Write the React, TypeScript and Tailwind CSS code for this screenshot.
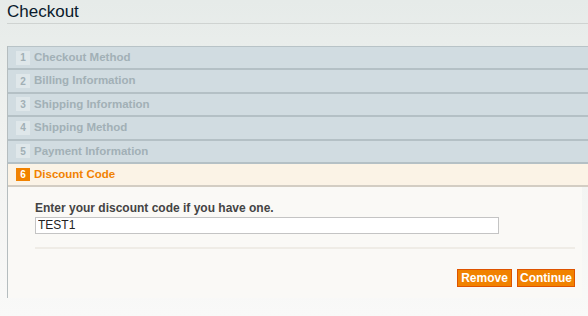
import React from "react";

const steps = [
  "Checkout Method",
  "Billing Information",
  "Shipping Information",
  "Shipping Method",
  "Payment Information",
];

export default function App() {
  return (
    <div
      className="w-[588px] h-[316px] overflow-hidden bg-gradient-to-b from-[#e6ebe9] via-[#f2f3f1] to-[#f9f9f8]"
      style={{ fontFamily: '"Liberation Sans", Arial, sans-serif' }}
    >
      <div className="pl-[7px] pt-[2px]">
        <h1 className="text-[17px] leading-[20px] text-[#0a1a2c] border-b border-[#cfd3d1] h-[22px]">
          Checkout
        </h1>
      </div>
      <div className="ml-[7px] mt-[22px] w-[600px] border-l border-[#b5bdbf]">
        <div className="border-t border-[#b8c3c7]">
          {steps.map((s, i) => (
            <div
              key={s}
              className="h-[23.4px] flex items-center bg-[#d1dce1] border-b-2 border-[#b4c0c5] pl-[8px]"
            >
              <span className="w-[14px] h-[14px] bg-[#dfe7ea] text-[#a1afb5] text-[10px] font-bold flex items-center justify-center">
                {i + 1}
              </span>
              <span className="ml-[4px] text-[11.5px] font-bold text-[#a2b0b6]">{s}</span>
            </div>
          ))}
          <div className="h-[23px] flex items-center bg-[#fbf3e6] border-b-2 border-[#d3cdc3] pl-[8px]">
            <span className="w-[14px] h-[13px] bg-[#f18200] text-white text-[10px] font-bold flex items-center justify-center">
              6
            </span>
            <span className="ml-[4px] text-[11.5px] font-bold text-[#f18200]">Discount Code</span>
          </div>
        </div>
        <div className="bg-[#faf9f6] h-[111px] pl-[27px] pt-[14px] w-[574px]">
          <div className="text-[12px] font-bold text-[#444] leading-[15px]">
            Enter your discount code if you have one.
          </div>
          <input
            readOnly
            value="TEST1"
            className="block w-[464px] h-[17px] border border-[#c4c4c4] bg-white text-[12px] text-[#222] px-[2px] mt-[1px] outline-none"
            style={{ fontFamily: '"Liberation Sans", Arial, sans-serif' }}
          />
          <div className="mt-[13px] w-[540px] border-t-2 border-[#efece6]" />
          <div className="flex justify-end gap-[5px] w-[540px] mt-[20px]">
            <button className="h-[18px] w-[55px] bg-[#f18200] border border-[#de5400] text-white text-[12px] font-bold leading-[16px]">
              Remove
            </button>
            <button className="h-[18px] w-[58px] bg-[#f18200] border border-[#de5400] text-white text-[12px] font-bold leading-[16px]">
              Continue
            </button>
          </div>
        </div>
      </div>
    </div>
  );
}
